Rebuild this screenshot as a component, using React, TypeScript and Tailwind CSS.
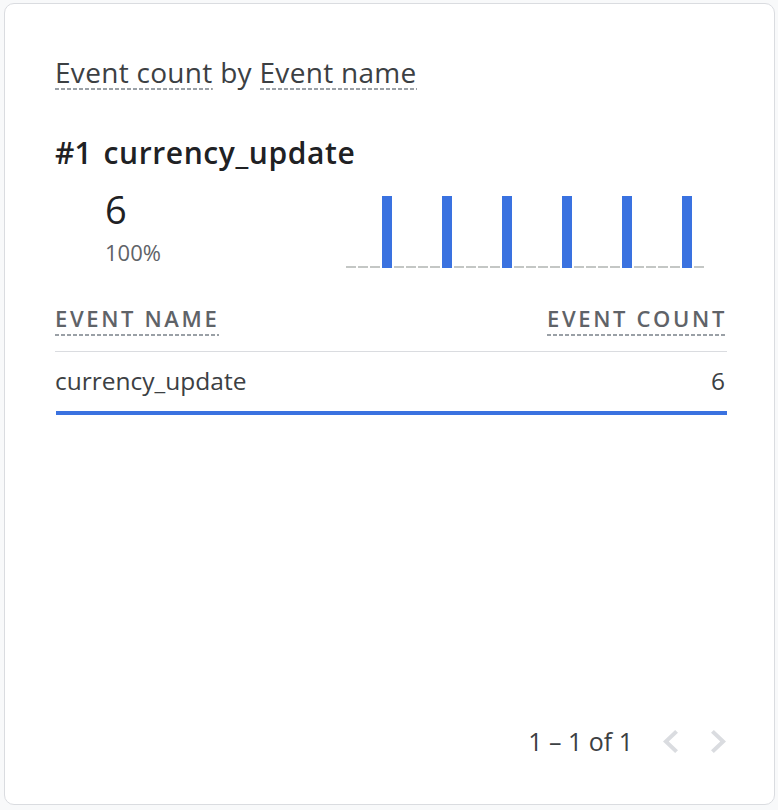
import React from "react";

const bars = [36, 96, 156, 216, 276, 336];

function Chevron({ dir }: { dir: "left" | "right" }) {
  const d =
    dir === "left"
      ? "M15.41 7.41L14 6l-6 6 6 6 1.41-1.41L10.83 12z"
      : "M8.59 16.59L10 18l6-6-6-6-1.41 1.41L13.17 12z";
  return (
    <svg
      width="15"
      height="23"
      viewBox={dir === "left" ? "8 6 7.41 12" : "8.59 6 7.41 12"}
      preserveAspectRatio="none"
      className="block"
    >
      <path d={d} fill="#dadce0" />
    </svg>
  );
}

export default function App() {
  const dash =
    "bg-[image:repeating-linear-gradient(to_right,#9aa0a6_0px,#9aa0a6_4px,transparent_4px,transparent_6px)] bg-no-repeat bg-bottom bg-[length:100%_2px]";
  return (
    <div
      className="w-[778px] h-[810px] bg-[#f8f9fa] pl-[4px] pt-[3px]"
      style={{ fontFamily: "'Open Sans', Roboto, Arial, sans-serif" }}
    >
      <div className="w-[771px] h-[802px] bg-white border border-[#dadce0] rounded-[10px] flex flex-col pl-[50px] pr-[47px] pt-[52px] pb-[49px]">
        {/* Title */}
        <div className="text-[28px] leading-[32px] tracking-[0.3px] text-[#3c4043] whitespace-nowrap">
          <span className={`inline-block pb-[2px] ${dash}`}>Event count</span>{" "}
          by{" "}
          <span className={`inline-block pb-[2px] ${dash}`}>Event name</span>
        </div>

        {/* Top item */}
        <div className="mt-[45px] text-[30px] leading-[36px] text-[#202124] whitespace-nowrap font-semibold">
          <span>#1</span>
          <span className="ml-[12px] tracking-[0.6px]">currency_update</span>
        </div>

        <div className="mt-[18px] flex items-start">
          <div className="w-[291px] pl-[50px] flex flex-col">
            <div className="text-[38px] leading-[40px] text-[#202124]">6</div>
            <div className="mt-[11px] text-[22px] leading-[24px] text-[#5f6368]">100%</div>
          </div>
          <svg width="358" height="72" className="mt-[7px] block">
            <line
              x1="0"
              y1="71"
              x2="358"
              y2="71"
              stroke="#c4c7c5"
              strokeWidth="2"
              strokeDasharray="10 2"
            />
            {bars.map((x) => (
              <rect key={x} x={x} y={0} width={10} height={72} fill="#3a72e0" />
            ))}
          </svg>
        </div>

        {/* Table header */}
        <div className="mt-[38px] flex justify-between items-start text-[22px] leading-[24px] font-semibold tracking-[0.12em] text-[#5f6368]">
          <span className={`inline-block pb-[6px] ${dash}`}>EVENT NAME</span>
          <span className={`inline-block pb-[6px] ${dash}`}>EVENT COUNT</span>
        </div>
        <div className="mt-[15px] h-px bg-[#dadce0]" />

        {/* Row */}
        <div className="pt-[15px] flex justify-between text-[24.5px] leading-[28px] text-[#3c4043]">
          <span>currency_update</span>
          <span className="mr-[2px]">6</span>
        </div>
        <div className="mt-[16px] ml-[1px] h-[4px] bg-[#3a72e0]" />

        {/* Pagination */}
        <div className="mt-auto flex items-center justify-end">
          <span className="text-[25px] leading-[28px] text-[#3c4043]">1 – 1 of 1</span>
          <span className="ml-[30px]">
            <Chevron dir="left" />
          </span>
          <span className="ml-[33px] mr-[1px]">
            <Chevron dir="right" />
          </span>
        </div>
      </div>
    </div>
  );
}
